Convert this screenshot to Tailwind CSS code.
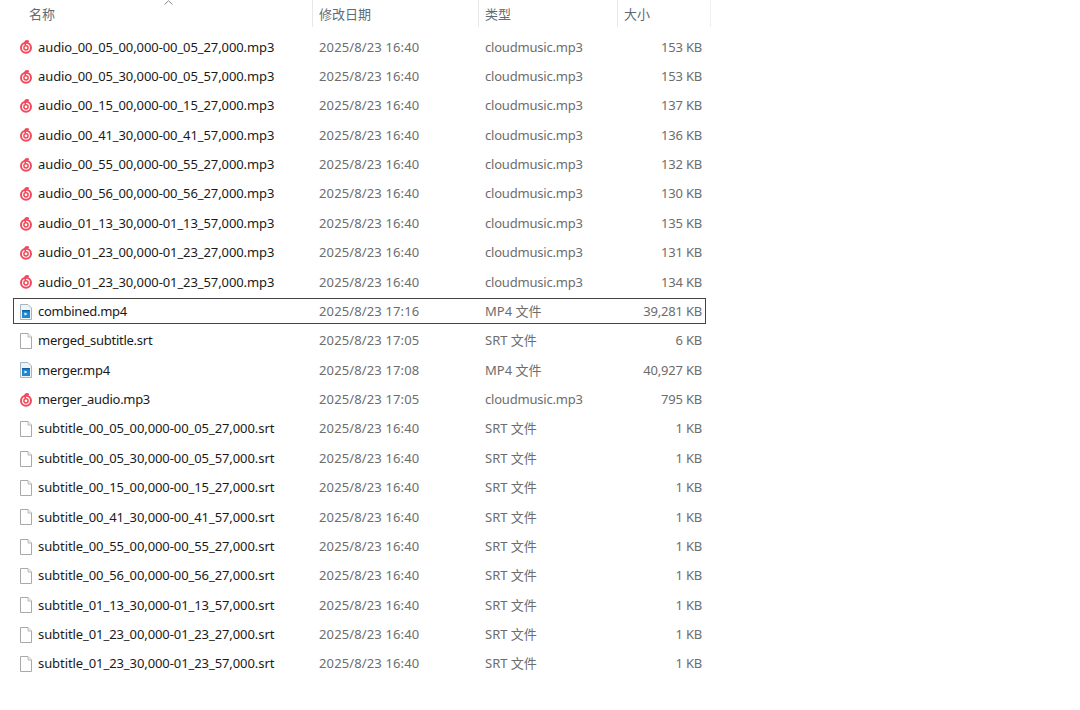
<!DOCTYPE html>
<html><head><meta charset="utf-8">
<script src="https://cdn.jsdelivr.net/npm/@tailwindcss/browser@4"></script>
</head>
<body class="bg-white">
<svg width="0" height="0" class="absolute">
<defs>
<symbol id="cm" viewBox="0 0 14 14"><circle cx="7" cy="7.8" r="5" fill="none" stroke="#f2495c" stroke-width="2"/><circle cx="7" cy="7.8" r="2.1" fill="none" stroke="#f2495c" stroke-width="1.5"/><path d="M6.5 5.6 L6 3 Q6 .9 8 .9 L10 1.6" fill="none" stroke="#f2495c" stroke-width="1.6"/></symbol>
<symbol id="doc" viewBox="0 0 14 16"><path d="M1.5 .5H9L12.5 4V15.5H1.5Z" fill="#fff" stroke="#a8a8a8"/><path d="M9 .5V4H12.5" fill="#f2f2f2" stroke="#b8b8b8"/></symbol>
<symbol id="mp4" viewBox="0 0 14 16"><path d="M1.5 .5H9L12.5 4V15.5H1.5Z" fill="#eef3f7" stroke="#a8b4bf"/><rect x="3" y="6" width="8" height="8" fill="#1f86d0"/><path d="M5.5 8.5L8.5 10L5.5 11.5Z" fill="#fff"/><rect x="3" y="6" width="8" height="1.4" fill="#0f5f9f"/></symbol>
</defs>
</svg>
<div class="w-[1080px] h-[710px] overflow-hidden font-['Noto_Sans','Noto_Sans_CJK_SC',sans-serif] text-[13px] text-[#6d6d6d]">
<div class="relative flex h-[27px] w-[711px] text-[#5f6b76]">
<div class="w-[313px] pl-[29px] pt-[5px] border-r border-[#e8e8e8]">名称</div>
<div class="w-[166px] pl-[6px] pt-[5px] border-r border-[#e8e8e8]">修改日期</div>
<div class="w-[139px] pl-[6px] pt-[5px] border-r border-[#e8e8e8]">类型</div>
<div class="w-[93px] pl-[6px] pt-[5px] border-r border-[#f0f0f0]">大小</div>
<svg class="absolute left-[164px] top-0" width="9" height="5" viewBox="0 0 9 5"><path d="M.5 4.5L4.5 .8L8.5 4.5" fill="none" stroke="#8a8a8a"/></svg>
</div>
<div class="pt-[5.6px] w-[711px]">
<div class="flex items-center h-[29.38px]"><svg class="ml-[19px] w-[14px] h-[14px]"><use href="#cm"/></svg><span class="ml-[5px] w-[281px] text-[#1a1a1a] tracking-[-0.09px]">audio_00_05_00,000-00_05_27,000.mp3</span><span class="w-[166px] tracking-[0.13px]">2025/8/23 16:40</span><span class="w-[139px] tracking-[-0.2px]">cloudmusic.mp3</span><span class="w-[78px] text-right tracking-[-0.2px]">153 KB</span></div>
<div class="flex items-center h-[29.38px]"><svg class="ml-[19px] w-[14px] h-[14px]"><use href="#cm"/></svg><span class="ml-[5px] w-[281px] text-[#1a1a1a] tracking-[-0.09px]">audio_00_05_30,000-00_05_57,000.mp3</span><span class="w-[166px] tracking-[0.13px]">2025/8/23 16:40</span><span class="w-[139px] tracking-[-0.2px]">cloudmusic.mp3</span><span class="w-[78px] text-right tracking-[-0.2px]">153 KB</span></div>
<div class="flex items-center h-[29.38px]"><svg class="ml-[19px] w-[14px] h-[14px]"><use href="#cm"/></svg><span class="ml-[5px] w-[281px] text-[#1a1a1a] tracking-[-0.09px]">audio_00_15_00,000-00_15_27,000.mp3</span><span class="w-[166px] tracking-[0.13px]">2025/8/23 16:40</span><span class="w-[139px] tracking-[-0.2px]">cloudmusic.mp3</span><span class="w-[78px] text-right tracking-[-0.2px]">137 KB</span></div>
<div class="flex items-center h-[29.38px]"><svg class="ml-[19px] w-[14px] h-[14px]"><use href="#cm"/></svg><span class="ml-[5px] w-[281px] text-[#1a1a1a] tracking-[-0.09px]">audio_00_41_30,000-00_41_57,000.mp3</span><span class="w-[166px] tracking-[0.13px]">2025/8/23 16:40</span><span class="w-[139px] tracking-[-0.2px]">cloudmusic.mp3</span><span class="w-[78px] text-right tracking-[-0.2px]">136 KB</span></div>
<div class="flex items-center h-[29.38px]"><svg class="ml-[19px] w-[14px] h-[14px]"><use href="#cm"/></svg><span class="ml-[5px] w-[281px] text-[#1a1a1a] tracking-[-0.09px]">audio_00_55_00,000-00_55_27,000.mp3</span><span class="w-[166px] tracking-[0.13px]">2025/8/23 16:40</span><span class="w-[139px] tracking-[-0.2px]">cloudmusic.mp3</span><span class="w-[78px] text-right tracking-[-0.2px]">132 KB</span></div>
<div class="flex items-center h-[29.38px]"><svg class="ml-[19px] w-[14px] h-[14px]"><use href="#cm"/></svg><span class="ml-[5px] w-[281px] text-[#1a1a1a] tracking-[-0.09px]">audio_00_56_00,000-00_56_27,000.mp3</span><span class="w-[166px] tracking-[0.13px]">2025/8/23 16:40</span><span class="w-[139px] tracking-[-0.2px]">cloudmusic.mp3</span><span class="w-[78px] text-right tracking-[-0.2px]">130 KB</span></div>
<div class="flex items-center h-[29.38px]"><svg class="ml-[19px] w-[14px] h-[14px]"><use href="#cm"/></svg><span class="ml-[5px] w-[281px] text-[#1a1a1a] tracking-[-0.09px]">audio_01_13_30,000-01_13_57,000.mp3</span><span class="w-[166px] tracking-[0.13px]">2025/8/23 16:40</span><span class="w-[139px] tracking-[-0.2px]">cloudmusic.mp3</span><span class="w-[78px] text-right tracking-[-0.2px]">135 KB</span></div>
<div class="flex items-center h-[29.38px]"><svg class="ml-[19px] w-[14px] h-[14px]"><use href="#cm"/></svg><span class="ml-[5px] w-[281px] text-[#1a1a1a] tracking-[-0.09px]">audio_01_23_00,000-01_23_27,000.mp3</span><span class="w-[166px] tracking-[0.13px]">2025/8/23 16:40</span><span class="w-[139px] tracking-[-0.2px]">cloudmusic.mp3</span><span class="w-[78px] text-right tracking-[-0.2px]">131 KB</span></div>
<div class="flex items-center h-[29.38px]"><svg class="ml-[19px] w-[14px] h-[14px]"><use href="#cm"/></svg><span class="ml-[5px] w-[281px] text-[#1a1a1a] tracking-[-0.09px]">audio_01_23_30,000-01_23_57,000.mp3</span><span class="w-[166px] tracking-[0.13px]">2025/8/23 16:40</span><span class="w-[139px] tracking-[-0.2px]">cloudmusic.mp3</span><span class="w-[78px] text-right tracking-[-0.2px]">134 KB</span></div>
<div class="relative flex items-center h-[29.38px]"><div class="absolute left-[13px] top-[1.5px] w-[693px] h-[26px] border border-[#444]"></div><svg class="ml-[18.5px] mr-[.5px] w-[14px] h-[16px]"><use href="#mp4"/></svg><span class="ml-[5px] w-[281px] text-[#1a1a1a] tracking-[-0.25px]">combined.mp4</span><span class="w-[166px] tracking-[0.13px]">2025/8/23 17:16</span><span class="w-[139px]">MP4 文件</span><span class="w-[78px] text-right tracking-[-0.2px]">39,281 KB</span></div>
<div class="flex items-center h-[29.38px]"><svg class="ml-[18.5px] mr-[.5px] w-[14px] h-[16px]"><use href="#doc"/></svg><span class="ml-[5px] w-[281px] text-[#1a1a1a] tracking-[-0.26px]">merged_subtitle.srt</span><span class="w-[166px] tracking-[0.13px]">2025/8/23 17:05</span><span class="w-[139px]">SRT 文件</span><span class="w-[78px] text-right tracking-[-0.2px]">6 KB</span></div>
<div class="flex items-center h-[29.38px]"><svg class="ml-[18.5px] mr-[.5px] w-[14px] h-[16px]"><use href="#mp4"/></svg><span class="ml-[5px] w-[281px] text-[#1a1a1a] tracking-[-0.25px]">merger.mp4</span><span class="w-[166px] tracking-[0.13px]">2025/8/23 17:08</span><span class="w-[139px]">MP4 文件</span><span class="w-[78px] text-right tracking-[-0.2px]">40,927 KB</span></div>
<div class="flex items-center h-[29.38px]"><svg class="ml-[19px] w-[14px] h-[14px]"><use href="#cm"/></svg><span class="ml-[5px] w-[281px] text-[#1a1a1a] tracking-[-0.3px]">merger_audio.mp3</span><span class="w-[166px] tracking-[0.13px]">2025/8/23 17:05</span><span class="w-[139px] tracking-[-0.2px]">cloudmusic.mp3</span><span class="w-[78px] text-right tracking-[-0.2px]">795 KB</span></div>
<div class="flex items-center h-[29.38px]"><svg class="ml-[18.5px] mr-[.5px] w-[14px] h-[16px]"><use href="#doc"/></svg><span class="ml-[5px] w-[281px] text-[#1a1a1a] tracking-[-0.08px]">subtitle_00_05_00,000-00_05_27,000.srt</span><span class="w-[166px] tracking-[0.13px]">2025/8/23 16:40</span><span class="w-[139px]">SRT 文件</span><span class="w-[78px] text-right tracking-[-0.2px]">1 KB</span></div>
<div class="flex items-center h-[29.38px]"><svg class="ml-[18.5px] mr-[.5px] w-[14px] h-[16px]"><use href="#doc"/></svg><span class="ml-[5px] w-[281px] text-[#1a1a1a] tracking-[-0.08px]">subtitle_00_05_30,000-00_05_57,000.srt</span><span class="w-[166px] tracking-[0.13px]">2025/8/23 16:40</span><span class="w-[139px]">SRT 文件</span><span class="w-[78px] text-right tracking-[-0.2px]">1 KB</span></div>
<div class="flex items-center h-[29.38px]"><svg class="ml-[18.5px] mr-[.5px] w-[14px] h-[16px]"><use href="#doc"/></svg><span class="ml-[5px] w-[281px] text-[#1a1a1a] tracking-[-0.08px]">subtitle_00_15_00,000-00_15_27,000.srt</span><span class="w-[166px] tracking-[0.13px]">2025/8/23 16:40</span><span class="w-[139px]">SRT 文件</span><span class="w-[78px] text-right tracking-[-0.2px]">1 KB</span></div>
<div class="flex items-center h-[29.38px]"><svg class="ml-[18.5px] mr-[.5px] w-[14px] h-[16px]"><use href="#doc"/></svg><span class="ml-[5px] w-[281px] text-[#1a1a1a] tracking-[-0.08px]">subtitle_00_41_30,000-00_41_57,000.srt</span><span class="w-[166px] tracking-[0.13px]">2025/8/23 16:40</span><span class="w-[139px]">SRT 文件</span><span class="w-[78px] text-right tracking-[-0.2px]">1 KB</span></div>
<div class="flex items-center h-[29.38px]"><svg class="ml-[18.5px] mr-[.5px] w-[14px] h-[16px]"><use href="#doc"/></svg><span class="ml-[5px] w-[281px] text-[#1a1a1a] tracking-[-0.08px]">subtitle_00_55_00,000-00_55_27,000.srt</span><span class="w-[166px] tracking-[0.13px]">2025/8/23 16:40</span><span class="w-[139px]">SRT 文件</span><span class="w-[78px] text-right tracking-[-0.2px]">1 KB</span></div>
<div class="flex items-center h-[29.38px]"><svg class="ml-[18.5px] mr-[.5px] w-[14px] h-[16px]"><use href="#doc"/></svg><span class="ml-[5px] w-[281px] text-[#1a1a1a] tracking-[-0.08px]">subtitle_00_56_00,000-00_56_27,000.srt</span><span class="w-[166px] tracking-[0.13px]">2025/8/23 16:40</span><span class="w-[139px]">SRT 文件</span><span class="w-[78px] text-right tracking-[-0.2px]">1 KB</span></div>
<div class="flex items-center h-[29.38px]"><svg class="ml-[18.5px] mr-[.5px] w-[14px] h-[16px]"><use href="#doc"/></svg><span class="ml-[5px] w-[281px] text-[#1a1a1a] tracking-[-0.08px]">subtitle_01_13_30,000-01_13_57,000.srt</span><span class="w-[166px] tracking-[0.13px]">2025/8/23 16:40</span><span class="w-[139px]">SRT 文件</span><span class="w-[78px] text-right tracking-[-0.2px]">1 KB</span></div>
<div class="flex items-center h-[29.38px]"><svg class="ml-[18.5px] mr-[.5px] w-[14px] h-[16px]"><use href="#doc"/></svg><span class="ml-[5px] w-[281px] text-[#1a1a1a] tracking-[-0.08px]">subtitle_01_23_00,000-01_23_27,000.srt</span><span class="w-[166px] tracking-[0.13px]">2025/8/23 16:40</span><span class="w-[139px]">SRT 文件</span><span class="w-[78px] text-right tracking-[-0.2px]">1 KB</span></div>
<div class="flex items-center h-[29.38px]"><svg class="ml-[18.5px] mr-[.5px] w-[14px] h-[16px]"><use href="#doc"/></svg><span class="ml-[5px] w-[281px] text-[#1a1a1a] tracking-[-0.08px]">subtitle_01_23_30,000-01_23_57,000.srt</span><span class="w-[166px] tracking-[0.13px]">2025/8/23 16:40</span><span class="w-[139px]">SRT 文件</span><span class="w-[78px] text-right tracking-[-0.2px]">1 KB</span></div>
</div>
</div>
</body></html>
